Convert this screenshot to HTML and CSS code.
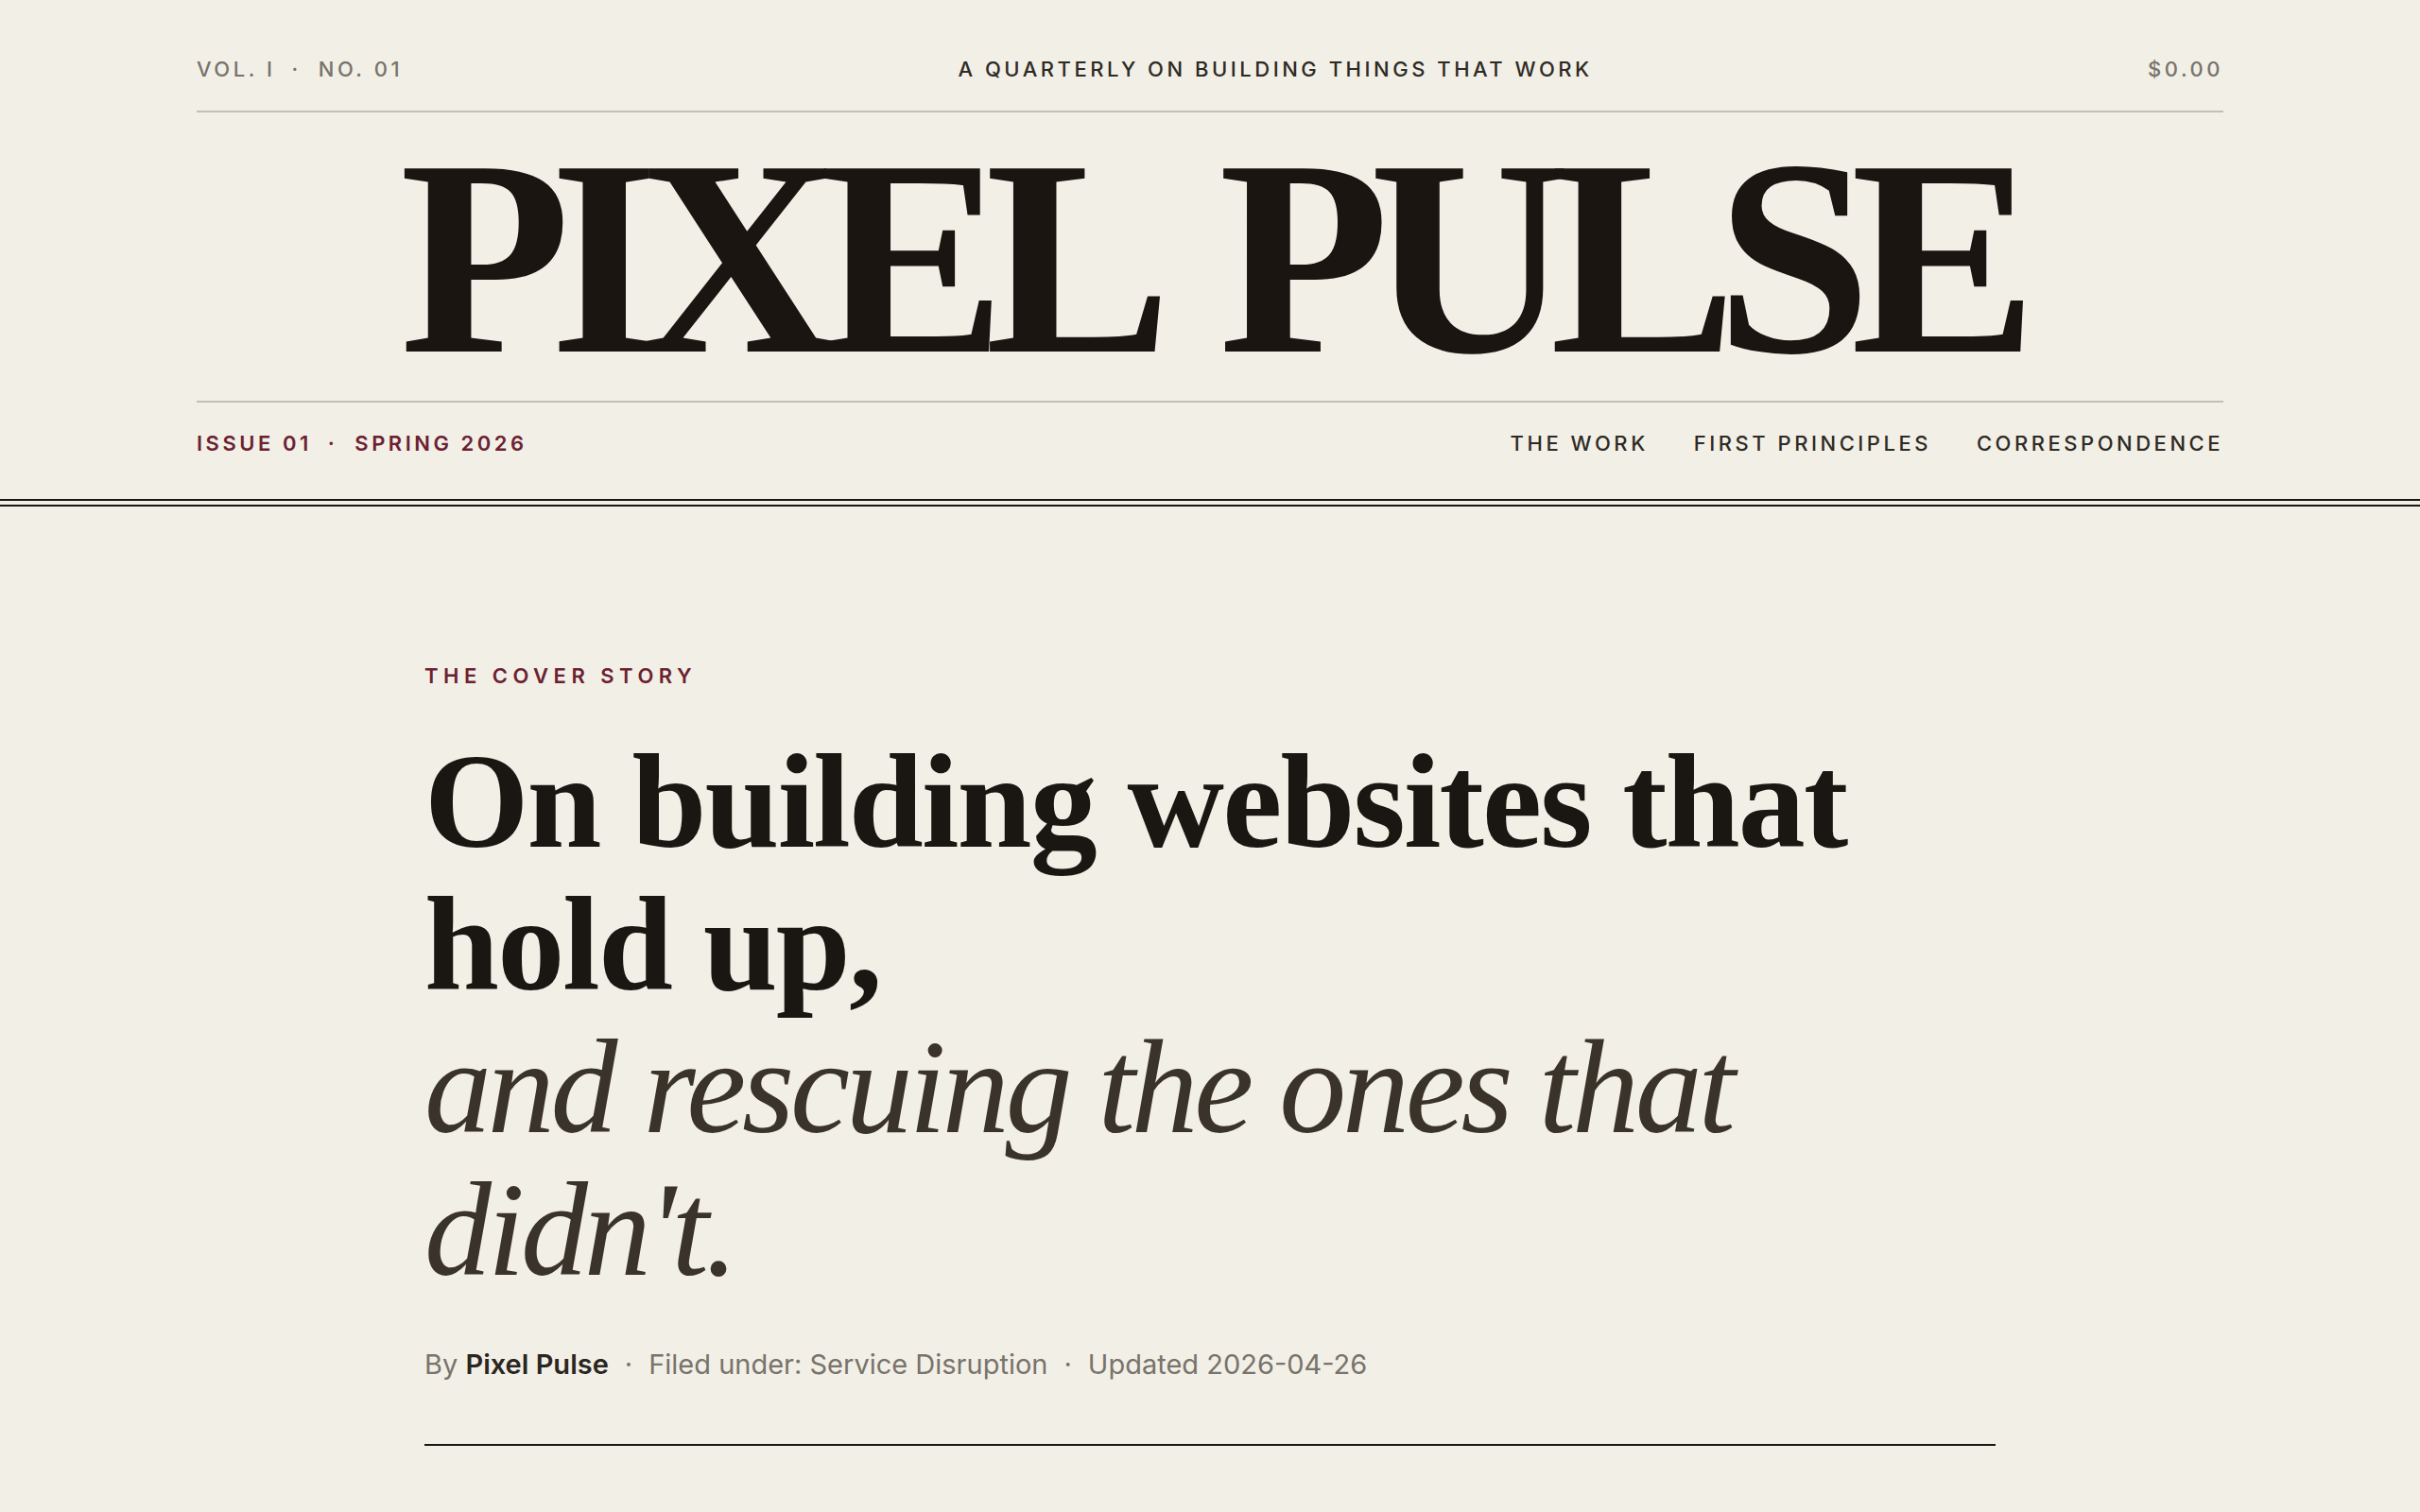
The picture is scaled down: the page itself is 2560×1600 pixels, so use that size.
FILE: index.html
```html
<!DOCTYPE html>
<html lang="en">
<head>
<meta charset="utf-8">
<title>Pixel Pulse — On building websites that hold up</title>
<link rel="stylesheet" href="styles.css">
</head>
<body>
<header class="masthead">
  <div class="wrap">
    <div class="topbar">
      <span class="meta">VOL. I<span class="sep">·</span>NO. 01</span>
      <span class="tagline">A QUARTERLY ON BUILDING THINGS THAT WORK</span>
      <span class="meta">$0.00</span>
    </div>
    <h1 class="title">PIXEL PULSE</h1>
    <div class="navrow">
      <span class="issue">ISSUE 01<span class="sep">·</span>SPRING 2026</span>
      <nav class="nav">
        <a href="#">THE WORK</a>
        <a href="#">FIRST PRINCIPLES</a>
        <a href="#">CORRESPONDENCE</a>
      </nav>
    </div>
  </div>
  <div class="double-rule"></div>
</header>
<main class="story">
  <p class="kicker">THE COVER STORY</p>
  <h2 class="headline">On building websites that hold up, <em class="dek">and rescuing the ones that didn't.</em></h2>
  <p class="byline">By <strong>Pixel Pulse</strong><span class="sep">·</span>Filed under: Service Disruption<span class="sep">·</span>Updated 2026-04-26</p>
  <div class="rule"></div>
</main>
</body>
</html>
```
FILE: styles.css
```css
html, body {
  margin: 0;
  padding: 0;
}
body {
  background: #f2efe7;
  color: #1a1612;
  font-family: Inter, "Noto Sans", sans-serif;
}
a {
  color: inherit;
  text-decoration: none;
}

.wrap {
  width: 2144px;
  margin: 0 auto;
}

.topbar {
  display: flex;
  justify-content: space-between;
  align-items: center;
  padding: 60px 0 30px;
  line-height: 27px;
  font-size: 22px;
  font-weight: 500;
  letter-spacing: 0.16em;
  border-bottom: 2px solid #c3bfb7;
}
.meta {
  color: #78736b;
}
.tagline {
  color: #2e2a24;
}
.sep {
  margin: 0 18px 0 17px;
}

.title {
  margin: 0;
  padding: 5px 0 4px 0;
  font-family: "Liberation Serif", "Times New Roman", serif;
  font-weight: 700;
  font-size: 296px;
  line-height: 296px;
  letter-spacing: -22px;
  word-spacing: 36px;
  text-indent: -4px;
  text-align: center;
  color: #1a1511;
  border-bottom: 2px solid #c3bfb7;
  white-space: nowrap;
}

.navrow {
  display: flex;
  justify-content: space-between;
  align-items: center;
  padding: 30px 0 45px;
  line-height: 27px;
  font-size: 22px;
  letter-spacing: 0.16em;
}
.issue {
  color: #6c2131;
  font-weight: 600;
}
.nav {
  display: flex;
  gap: 48px;
  color: #2e2a24;
  font-weight: 500;
}

.double-rule {
  height: 4px;
  border-top: 2px solid #1a1612;
  border-bottom: 2px solid #1a1612;
}

.story {
  width: 1662px;
  margin: 0 auto;
  padding-top: 166px;
}
.kicker {
  margin: 0;
  line-height: 27px;
  font-size: 22px;
  font-weight: 600;
  letter-spacing: 0.25em;
  color: #6c2131;
}
.headline {
  margin: 44px 0 0;
  font-family: "Liberation Serif", "Times New Roman", serif;
  font-weight: 700;
  font-size: 142px;
  line-height: 151px;
  letter-spacing: -0.013em;
  color: #1a1612;
}
.dek {
  display: block;
  font-weight: 400;
  font-style: italic;
  letter-spacing: -0.03em;
  color: #3a332a;
}
.byline {
  margin: 49px 0 0;
  font-size: 29px;
  line-height: 36px;
  color: #78736b;
}
.byline strong {
  font-weight: 600;
  color: #2a2520;
}
.byline .sep {
  margin: 0 17px;
}
.rule {
  margin-top: 66px;
  height: 2px;
  background: #1a1612;
}
```
